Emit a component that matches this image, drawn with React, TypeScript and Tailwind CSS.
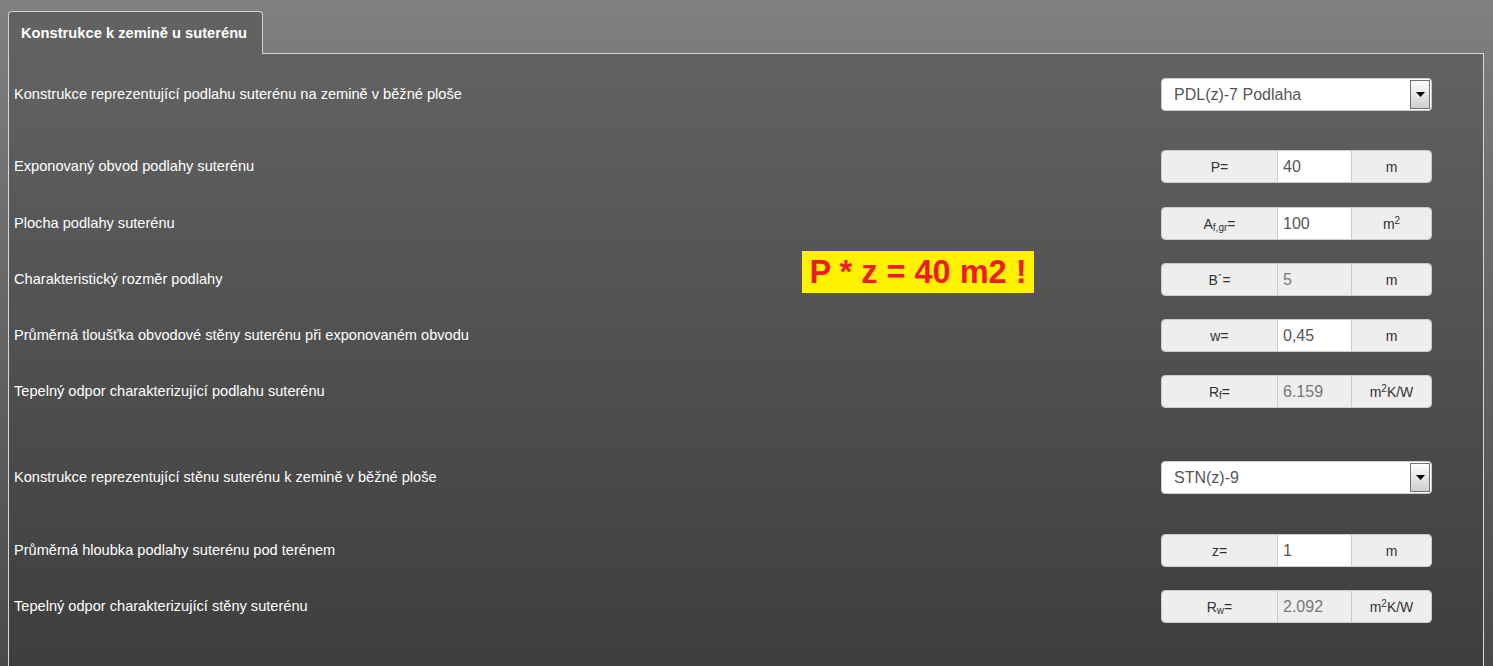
import React from "react";

type Row =
  | { kind: "select"; label: string; value: string; mt: string }
  | {
      kind: "input";
      label: string;
      sym: React.ReactNode;
      value: string;
      unit: React.ReactNode;
      readOnly?: boolean;
      mt: string;
    };

const rows: Row[] = [
  {
    kind: "select",
    label: "Konstrukce reprezentující podlahu suterénu na zemině v běžné ploše",
    value: "PDL(z)-7 Podlaha",
    mt: "mt-[24px]",
  },
  {
    kind: "input",
    label: "Exponovaný obvod podlahy suterénu",
    sym: "P=",
    value: "40",
    unit: "m",
    mt: "mt-[39px]",
  },
  {
    kind: "input",
    label: "Plocha podlahy suterénu",
    sym: (
      <>
        A<sub className="text-[10px]">f,gr</sub>=
      </>
    ),
    value: "100",
    unit: (
      <>
        m<sup className="text-[10px]">2</sup>
      </>
    ),
    mt: "mt-[24px]",
  },
  {
    kind: "input",
    label: "Charakteristický rozměr podlahy",
    sym: "B´=",
    value: "5",
    unit: "m",
    readOnly: true,
    mt: "mt-[23px]",
  },
  {
    kind: "input",
    label: "Průměrná tloušťka obvodové stěny suterénu při exponovaném obvodu",
    sym: "w=",
    value: "0,45",
    unit: "m",
    mt: "mt-[23px]",
  },
  {
    kind: "input",
    label: "Tepelný odpor charakterizující podlahu suterénu",
    sym: (
      <>
        R<sub className="text-[10px]">f</sub>=
      </>
    ),
    value: "6.159",
    unit: (
      <>
        m<sup className="text-[10px]">2</sup>K/W
      </>
    ),
    readOnly: true,
    mt: "mt-[23px]",
  },
  {
    kind: "select",
    label: "Konstrukce reprezentující stěnu suterénu k zemině v běžné ploše",
    value: "STN(z)-9",
    mt: "mt-[53px]",
  },
  {
    kind: "input",
    label: "Průměrná hloubka podlahy suterénu pod terénem",
    sym: "z=",
    value: "1",
    unit: "m",
    mt: "mt-[40px]",
  },
  {
    kind: "input",
    label: "Tepelný odpor charakterizující stěny suterénu",
    sym: (
      <>
        R<sub className="text-[10px]">w</sub>=
      </>
    ),
    value: "2.092",
    unit: (
      <>
        m<sup className="text-[10px]">2</sup>K/W
      </>
    ),
    readOnly: true,
    mt: "mt-[23px]",
  },
];

function SelectBox({ value }: { value: string }) {
  return (
    <div className="relative flex h-[33px] w-[271px] items-center rounded-[4px] border border-[#ccc] bg-white pl-[12px] text-[16px] text-[#555]">
      {value}
      <div className="absolute right-[1px] top-[1px] bottom-[1px] flex w-[20px] items-center justify-center border border-[#707070] bg-gradient-to-b from-[#fdfdfd] to-[#cfcfcf]">
        <svg width="9" height="5" viewBox="0 0 9 5">
          <path d="M0 0h9L4.5 5z" fill="#000" />
        </svg>
      </div>
    </div>
  );
}

function InputGroup({
  sym,
  value,
  unit,
  readOnly,
}: {
  sym: React.ReactNode;
  value: string;
  unit: React.ReactNode;
  readOnly?: boolean;
}) {
  return (
    <div className="flex h-[33px] w-[271px] overflow-hidden rounded-[4px] border border-[#ccc] text-[14px] text-[#333]">
      <div className="flex w-[115px] items-center justify-center bg-[#eee] leading-none">
        <span>{sym}</span>
      </div>
      <div
        className={`flex w-[75px] items-center border-x border-[#ccc] pl-[5px] text-[16px] ${
          readOnly ? "bg-[#eee] text-[#777]" : "bg-white text-[#555]"
        }`}
      >
        {value}
      </div>
      <div className="flex flex-1 items-center justify-center bg-[#eee] leading-none">
        <span>{unit}</span>
      </div>
    </div>
  );
}

export default function App() {
  return (
    <div
      className="min-h-[666px] bg-gradient-to-b from-[#808080] to-[#4a4a4a] px-[8px] pt-[11px] text-white"
      style={{ fontFamily: '"Liberation Sans", Arial, sans-serif' }}
    >
      <div className="flex">
        <div className="relative z-10 -mb-px flex h-[43px] w-[255px] items-center rounded-t-[4px] border border-b-0 border-[#cfcfcf] bg-[#626262] pl-[12px] text-[14.7px] font-bold">
          Konstrukce k zemině u suterénu
        </div>
      </div>
      <div className="relative mr-[1px] h-[613px] border border-b-0 border-[#d8d8d8] bg-gradient-to-b from-[#626262] to-[#3e3e3e]">
        {rows.map((row, i) => (
          <div
            key={i}
            className={`flex items-center justify-between pl-[5px] pr-[51px] ${row.mt}`}
          >
            <span className="text-[14.6px] text-white">{row.label}</span>
            {row.kind === "select" ? (
              <SelectBox value={row.value} />
            ) : (
              <InputGroup
                sym={row.sym}
                value={row.value}
                unit={row.unit}
                readOnly={row.readOnly}
              />
            )}
          </div>
        ))}
        <div className="absolute left-[793px] top-[197px] flex h-[42px] w-[232px] items-center justify-center bg-[#fff200] text-[32.5px] font-bold text-[#ed1c24]">
          P * z = 40 m2 !
        </div>
      </div>
    </div>
  );
}
